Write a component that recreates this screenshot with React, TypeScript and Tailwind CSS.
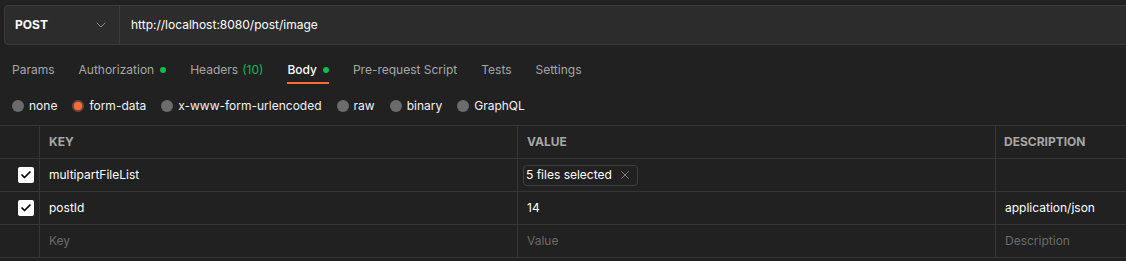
import { ChevronDown, X, Check } from 'lucide-react';

const tabs = [
  { label: 'Params' },
  { label: 'Authorization', dot: true },
  { label: 'Headers', count: '(10)' },
  { label: 'Body', dot: true, active: true },
  { label: 'Pre-request Script' },
  { label: 'Tests' },
  { label: 'Settings' },
];

const bodyTypes = ['none', 'form-data', 'x-www-form-urlencoded', 'raw', 'binary', 'GraphQL'];

function Checkbox() {
  return (
    <div className="w-4 h-4 rounded-[2px] bg-white flex items-center justify-center">
      <Check className="w-3 h-3 text-black" strokeWidth={3.5} />
    </div>
  );
}

export default function App() {
  return (
    <div
      className="w-full h-[261px] bg-[#212121] overflow-hidden text-[12px] text-[#f2f2f2]"
      style={{ fontFamily: 'Inter, "Noto Sans", sans-serif' }}
    >
      {/* URL bar */}
      <div className="ml-1 mr-[-20px] mt-[5px] h-10 flex border border-[#3a3a3a] rounded-[4px] bg-[#2c2c2c]">
        <div className="w-[115px] flex items-center justify-between pl-[10px] pr-[10px] border-r border-[#3a3a3a]">
          <span className="font-bold text-white">POST</span>
          <ChevronDown className="w-4 h-4 text-[#8a8a8a]" strokeWidth={1.5} />
        </div>
        <div className="flex items-center pl-[11px] text-white">http://localhost:8080/post/image</div>
      </div>

      {/* Tabs */}
      <div className="flex items-center mt-[10px] h-[30px] pl-3 gap-6">
        {tabs.map((t) => (
          <div key={t.label} className="relative h-full flex items-center">
            <span className={t.active ? 'text-white font-medium' : 'text-[#a6a6a6]'}>{t.label}</span>
            {t.count && <span className="ml-1 text-[#0cbb52]">{t.count}</span>}
            {t.dot && <span className="ml-[6px] w-[6px] h-[6px] rounded-full bg-[#0cbb52]" />}
            {t.active && <div className="absolute left-0 right-0 bottom-[1px] h-[2px] bg-[#ff6c37]" />}
          </div>
        ))}
      </div>

      {/* Body types */}
      <div className="flex items-center pt-[2px] h-[40px] pl-3 gap-[15px]">
        {bodyTypes.map((b) => (
          <div key={b} className="flex items-center gap-[5px]">
            {b === 'form-data' ? (
              <span className="w-3 h-3 rounded-full bg-[#ff6c37] border-2 border-[#6b4a3e]" />
            ) : (
              <span className="w-3 h-3 rounded-full bg-[#6b6b6b]" />
            )}
            <span className="text-[#f2f2f2]">{b}</span>
          </div>
        ))}
      </div>

      {/* Table */}
      <div className="border-t border-[#353535]">
        <div className="grid grid-cols-[40px_478px_478px_1fr] h-[33px] border-b border-[#353535]">
          <div className="border-r border-[#353535]" />
          <div className="border-r border-[#353535] flex items-center pl-[9px] font-bold text-[#a6a6a6]">KEY</div>
          <div className="border-r border-[#353535] flex items-center pl-[9px] font-bold text-[#a6a6a6]">VALUE</div>
          <div className="flex items-center pl-[8px] font-bold text-[#a6a6a6]">DESCRIPTION</div>
        </div>
        <div className="grid grid-cols-[40px_478px_478px_1fr] h-[33px] border-b border-[#353535]">
          <div className="border-r border-[#353535] flex items-center justify-end pr-[5px]">
            <Checkbox />
          </div>
          <div className="border-r border-[#353535] flex items-center pl-[9px] text-white">multipartFileList</div>
          <div className="border-r border-[#353535] flex items-center pl-[5px]">
            <div className="flex items-center h-[21px] px-[2px] border border-[#3f3f3f] rounded-[4px] text-white">
              <span>5 files selected</span>
              <X className="ml-[6px] mr-[3px] w-[14px] h-[14px] text-[#8a8a8a]" strokeWidth={1.5} />
            </div>
          </div>
          <div />
        </div>
        <div className="grid grid-cols-[40px_478px_478px_1fr] h-[33px] border-b border-[#353535]">
          <div className="border-r border-[#353535] flex items-center justify-end pr-[5px]">
            <Checkbox />
          </div>
          <div className="border-r border-[#353535] flex items-center pl-[9px] text-white">postId</div>
          <div className="border-r border-[#353535] flex items-center pl-[9px] text-white">14</div>
          <div className="flex items-center pl-[9px] text-white">application/json</div>
        </div>
        <div className="grid grid-cols-[40px_478px_478px_1fr] h-[33px] border-b border-[#353535]">
          <div className="border-r border-[#353535]" />
          <div className="border-r border-[#353535] flex items-center pl-[9px] text-[#6b6b6b]">Key</div>
          <div className="border-r border-[#353535] flex items-center pl-[9px] text-[#6b6b6b]">Value</div>
          <div className="flex items-center pl-[9px] text-[#6b6b6b]">Description</div>
        </div>
      </div>
    </div>
  );
}
